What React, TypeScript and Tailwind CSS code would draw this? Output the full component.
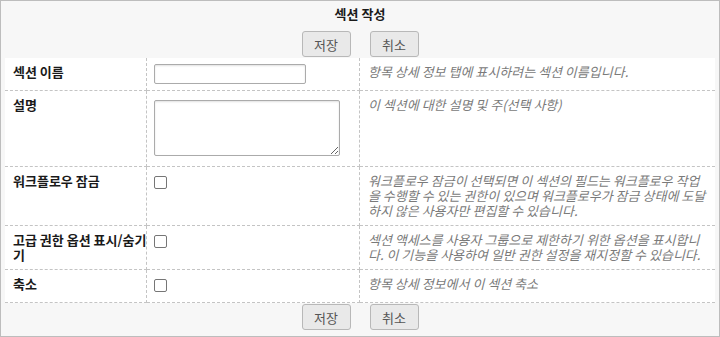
import React from "react";

const rows: { label: string; kind: "input" | "textarea" | "checkbox"; desc: string }[] = [
  { label: "섹션 이름", kind: "input", desc: "항목 상세 정보 탭에 표시하려는 섹션 이름입니다." },
  { label: "설명", kind: "textarea", desc: "이 섹션에 대한 설명 및 주(선택 사항)" },
  {
    label: "워크플로우 잠금",
    kind: "checkbox",
    desc: "워크플로우 잠금이 선택되면 이 섹션의 필드는 워크플로우 작업을 수행할 수 있는 권한이 있으며 워크플로우가 잠금 상태에 도달하지 않은 사용자만 편집할 수 있습니다.",
  },
  {
    label: "고급 권한 옵션 표시/숨기기",
    kind: "checkbox",
    desc: "섹션 액세스를 사용자 그룹으로 제한하기 위한 옵션을 표시합니다. 이 기능을 사용하여 일반 권한 설정을 재지정할 수 있습니다.",
  },
  { label: "축소", kind: "checkbox", desc: "항목 상세 정보에서 이 섹션 축소" },
];

function Buttons() {
  return (
    <div className="flex justify-center gap-[19px]">
      <button className="w-[49px] h-[26px] bg-[#e9e9e9] border border-[#b8b8b8] rounded-[3px] text-[13px] text-[#555] leading-none">
        저장
      </button>
      <button className="w-[49px] h-[26px] bg-[#e9e9e9] border border-[#b8b8b8] rounded-[3px] text-[13px] text-[#555] leading-none">
        취소
      </button>
    </div>
  );
}

export default function App() {
  return (
    <div className="w-[720px] h-[337px] box-border bg-[#f7f7f7] border border-[#bdbdbd] font-['Noto_Sans_CJK_KR',sans-serif] text-[13px] leading-[15px] flex flex-col">
      <div className="pt-[5px] text-center font-bold text-[#1a1a1a]">섹션 작성</div>
      <div className="mt-[10px]">
        <Buttons />
      </div>
      <div className="mx-[4px] mt-[1px] bg-white grid grid-cols-[142px_213px_355px]">
        {rows.map((r, i) => (
          <React.Fragment key={i}>
            <div className="border-b border-r border-dashed border-[#c4c4c4] pl-2 pr-0 pt-[6px] pb-[7px] font-bold text-[#1a1a1a]">
              <div className="w-[137px]">{r.label}</div>
            </div>
            <div
              className={
                "border-b border-r border-dashed border-[#c4c4c4] pl-[7px] pt-[6px] " +
                (r.kind === "input" ? "pb-[6px]" : "pb-[7px]")
              }
            >
              {r.kind === "input" && (
                <input
                  type="text"
                  className="block w-[152px] h-[20px] bg-white border border-[#ababab] rounded-[2px] shadow-[inset_0_1px_2px_rgba(0,0,0,0.12)] outline-none"
                />
              )}
              {r.kind === "textarea" && (
                <textarea className="block mt-[3px] mb-[3px] w-[186px] h-[56px] bg-white border border-[#ababab] rounded-[2px] shadow-[inset_0_1px_2px_rgba(0,0,0,0.12)] outline-none" />
              )}
              {r.kind === "checkbox" && (
                <input
                  type="checkbox"
                  className="block appearance-none mt-[3px] mb-[3px] w-[13px] h-[13px] bg-white border border-[#767676] rounded-[2px]"
                />
              )}
            </div>
            <div className="border-b border-dashed border-[#c4c4c4] pl-2 pr-2 pt-[6px] pb-[7px] italic text-[#7a7a7a]">
              {r.desc}
            </div>
          </React.Fragment>
        ))}
      </div>
      <div className="mt-[1px]">
        <Buttons />
      </div>
    </div>
  );
}
